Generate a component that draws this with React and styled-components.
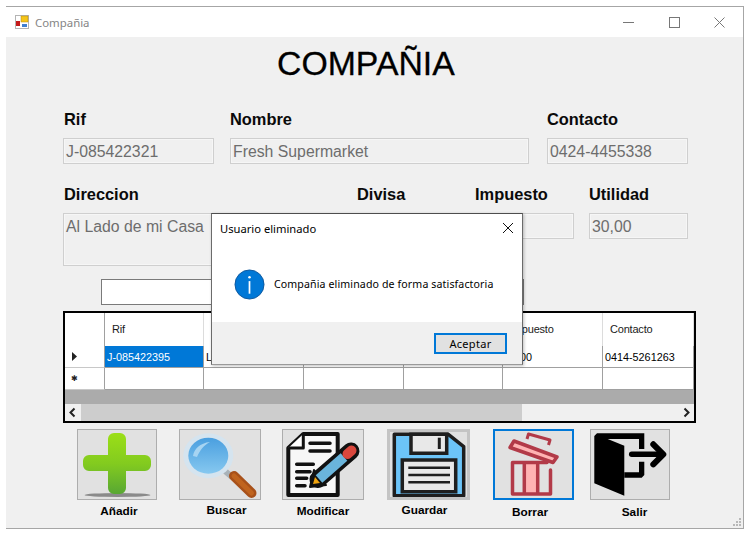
import styled, { createGlobalStyle } from 'styled-components';

const GlobalStyle = createGlobalStyle`
  html, body {
    margin: 0;
    padding: 0;
    background: #ffffff;
  }
`;

const Win = styled.div`
  position: relative;
  box-sizing: border-box;
  width: 738px;
  height: 523px;
  margin: 6px 0 0 6px;
  border-top: 1px solid #a6a6a6;
  border-right: 1px solid #a6a6a6;
  border-bottom: 1px solid #a6a6a6;
  background: #f0f0f0;
  font-family: "Liberation Sans", Arial, sans-serif;
  overflow: hidden;
`;

const TitleBar = styled.div`
  height: 30px;
  background: #ffffff;
  display: flex;
  align-items: center;
  padding: 0 1px 0 9px;
`;

const AppIcon = styled.svg`
  width: 14px;
  height: 14px;
  margin-right: 6px;
`;

const WinTitle = styled.span`
  font-family: "Noto Sans", sans-serif;
  font-size: 11.4px;
  color: #858585;
  flex: 1;
`;

const WinControl = styled.svg`
  width: 45px;
  height: 30px;
  display: block;
`;

const Form = styled.div`
  padding-left: 57px;
`;

const Heading = styled.h1`
  margin: 6px 0 0 214px;
  height: 40px;
  font-size: 33.8px;
  line-height: 40px;
  font-weight: 400;
  color: #000000;
  -webkit-text-stroke: 0.3px #000000;
`;

const Row = styled.div`
  display: flex;
  align-items: flex-start;
  margin-top: ${p => p.$top}px;
`;

const Field = styled.div`
  width: ${p => p.$w}px;
  margin-left: ${p => p.$gap || 0}px;
`;

const FieldLabel = styled.div`
  height: 20px;
  line-height: 20px;
  margin-bottom: 9px;
  padding-left: ${p => p.$inset || 0}px;
  font-size: 16.4px;
  font-weight: 700;
  color: #0a0a0a;
`;

const ReadOnlyBox = styled.div`
  box-sizing: border-box;
  height: ${p => p.$h || 26}px;
  padding: 3px 2px 0;
  border: 1px solid #cfcfcf;
  box-shadow: inset 0 0 0 1px #f6f6f6;
  background: #f0f0f0;
  font-size: 15.8px;
  line-height: 20px;
  color: #6d6d6d;
  white-space: nowrap;
  overflow: hidden;
`;

const SearchBox = styled.div`
  box-sizing: border-box;
  width: 423px;
  height: 26px;
  margin: 13px 0 0 38px;
  border: 1px solid #7a7a7a;
  background: #ffffff;
`;

const Table = styled.div`
  box-sizing: border-box;
  width: 633px;
  height: 112px;
  margin-top: 6px;
  border: 2px solid #000000;
  background: #ababab;
  display: flex;
  flex-direction: column;
  overflow: hidden;
`;

const TableRow = styled.div`
  display: grid;
  grid-template-columns: 40px 99px 100px 100px 99px 100px 91px;
  height: ${p => p.$h}px;
  flex: none;
`;

const HeaderCell = styled.div`
  box-sizing: border-box;
  background: #ffffff;
  border-right: 1px solid #dcdcdc;
  border-bottom: 1px solid #c8c8c8;
  font-size: 11px;
  letter-spacing: -0.2px;
  line-height: 33px;
  padding-left: 7px;
  color: #1a1a1a;
`;

const RowHead = styled.div`
  box-sizing: border-box;
  background: #ffffff;
  border-right: 1px solid #a0a0a0;
  border-bottom: 1px solid #c8c8c8;
  display: flex;
  align-items: center;
  padding-left: 6px;
  font-size: 8px;
  color: #222222;
`;

const Cell = styled.div`
  box-sizing: border-box;
  background: ${p => (p.$selected ? '#0078d7' : '#ffffff')};
  color: ${p => (p.$selected ? '#ffffff' : '#000000')};
  border-right: 1px solid #a0a0a0;
  border-bottom: 1px solid #a0a0a0;
  font-size: 10.8px;
  line-height: 22px;
  padding-left: 2px;
  white-space: nowrap;
  overflow: hidden;
`;

const ScrollBar = styled.div`
  margin-top: auto;
  height: 17px;
  background: #f0f0f0;
  display: flex;
  align-items: stretch;
`;

const ScrollButton = styled.svg`
  width: 16px;
  height: 17px;
  flex: none;
`;

const ScrollThumb = styled.div`
  width: 441px;
  background: #cdcdcd;
`;

const ScrollTrack = styled.div`
  flex: 1;
`;

const Toolbar = styled.div`
  display: flex;
  align-items: flex-start;
  margin: 6px 0 0 14px;
`;

const ToolItem = styled.div`
  display: flex;
  flex-direction: column;
  align-items: center;
  width: ${p => p.$w}px;
  margin-left: ${p => p.$gap || 0}px;
`;

const ToolButton = styled.div`
  box-sizing: border-box;
  width: 100%;
  height: 71px;
  background: #e1e1e1;
  border: ${p => p.$border || '1px solid #adadad'};
`;

const ToolIcon = styled.svg`
  width: 100%;
  height: 100%;
  display: block;
`;

const ToolLabel = styled.div`
  margin-top: ${p => p.$top}px;
  margin-left: ${p => p.$dx}px;
  font-size: 11.8px;
  line-height: 14px;
  font-weight: 700;
  color: #000000;
  white-space: nowrap;
`;

const Grip = styled.svg`
  position: absolute;
  right: 2px;
  bottom: 1px;
  width: 10px;
  height: 10px;
`;

const Dialog = styled.div`
  position: absolute;
  left: 205px;
  top: 206px;
  box-sizing: border-box;
  width: 312px;
  height: 152px;
  border: 1px solid #6b6b6b;
  border-top-color: #4d4d4d;
  border-bottom-color: #9a9a9a;
  box-shadow: 1px 1px 3px rgba(0, 0, 0, 0.25);
  background: #ffffff;
  display: flex;
  flex-direction: column;
  font-family: "Noto Sans", sans-serif;
  color: #000000;
`;

const DialogHead = styled.div`
  height: 28px;
  display: flex;
  align-items: center;
  justify-content: space-between;
  padding: 0 8px;
  font-size: 11.2px;
`;

const CloseIcon = styled.svg`
  width: 12px;
  height: 12px;
  display: block;
`;

const DialogBody = styled.div`
  flex: 1;
  display: flex;
  align-items: center;
  gap: 9px;
  padding: 4px 0 0 22px;
  font-size: 10.6px;
  letter-spacing: 0.12px;
`;

const InfoIcon = styled.svg`
  width: 31px;
  height: 31px;
  flex: none;
`;

const DialogFoot = styled.div`
  height: 42px;
  background: #f0f0f0;
  display: flex;
  justify-content: flex-end;
  align-items: flex-start;
  padding: 11px 15px 0 0;
  box-sizing: border-box;
`;

const OkButton = styled.div`
  box-sizing: border-box;
  width: 73px;
  height: 21px;
  border: 2px solid #0078d7;
  background: #e1e1e1;
  font-size: 11px;
  letter-spacing: 0.3px;
  line-height: 17px;
  text-align: center;
`;

const PlusIcon = () => (
  <ToolIcon viewBox="0 0 78 69">
    <defs>
      <linearGradient id="plusGreen" x1="0" y1="0" x2="0" y2="1">
        <stop offset="0" stopColor="#9bdf17" />
        <stop offset="0.5" stopColor="#83cb1f" />
        <stop offset="1" stopColor="#58a733" />
      </linearGradient>
    </defs>
    <ellipse cx="39.500" cy="65" rx="33" ry="2" fill="#8a8a8a" />
    <path
      d="M36 3h6a6 6 0 0 1 6 6v16h19a6 6 0 0 1 6 6v4a6 6 0 0 1-6 6H48v17a6 6 0 0 1-6 6h-6a6 6 0 0 1-6-6V41H11a6 6 0 0 1-6-6v-4a6 6 0 0 1 6-6h19V9a6 6 0 0 1 6-6z"
      fill="url(#plusGreen)"
    />
  </ToolIcon>
);

const LensIcon = () => (
  <ToolIcon viewBox="0 0 80 69">
    <defs>
      <linearGradient id="lensBlue" x1="0" y1="0" x2="0" y2="1">
        <stop offset="0" stopColor="#4a9fdf" />
        <stop offset="1" stopColor="#86c8f0" />
      </linearGradient>
    </defs>
    <path d="M45 41l7 6" stroke="#a9b2b8" strokeWidth="6" />
    <path d="M54 46l17.500 17" stroke="#a8511a" strokeWidth="10" strokeLinecap="round" />
    <path d="M54 46l17.500 17" stroke="#c0641f" strokeWidth="5" strokeLinecap="round" />
    <ellipse cx="28.300" cy="25.700" rx="25" ry="22.500" fill="#d5e4ef" />
    <ellipse cx="28.300" cy="25.700" rx="20" ry="18" fill="url(#lensBlue)" />
    <path d="M13 26c1-7 7-13 17-14-6 3-10 8-13 15z" fill="#a6d4f2" />
  </ToolIcon>
);

const NotesIcon = () => (
  <ToolIcon viewBox="0 0 80 69">
    <path d="M5.300 18L20.300 4h34.400v61H5.300z" fill="#f7f7f7" stroke="#111111" strokeWidth="4" strokeLinejoin="round" />
    <path d="M5.300 18h15V4" fill="#ffffff" stroke="#111111" strokeWidth="3" strokeLinejoin="round" />
    <path
      d="M27 13.300h20M27 21h20M13.700 34.300h16.600M13.700 41.700h13.300M13.700 48.300h10M13.700 55.700h8.300"
      stroke="#111111"
      strokeWidth="3.500"
      strokeLinecap="round"
    />
    <path d="M27 57l4-17 12 15z" fill="#111111" stroke="#111111" strokeWidth="2" strokeLinejoin="round" />
    <path d="M35 49.500L68 21" stroke="#111111" strokeWidth="17" strokeLinecap="round" />
    <path d="M36 49L61 27" stroke="#6ab5dc" strokeWidth="10" />
    <path d="M64.500 24l4-3.500" stroke="#d9473d" strokeWidth="10" strokeLinecap="round" />
    <path d="M30 54l2-7 5 6z" fill="#f0a40f" />
  </ToolIcon>
);

const DiskIcon = () => (
  <ToolIcon viewBox="0 0 77 65">
    <path d="M4.300 2.300h54l15.400 12.400v49H4.300z" fill="#6cc4f8" stroke="#1e1e1e" strokeWidth="3.500" strokeLinejoin="round" />
    <path d="M21 2.300h35.700v19H21z" fill="#e8e8e8" stroke="#1e1e1e" strokeWidth="3.500" />
    <path d="M49.300 5.700V17" stroke="#1e1e1e" strokeWidth="3" />
    <path d="M12.300 28h53.400v31.700H12.300z" fill="#e8e8e8" stroke="#1e1e1e" strokeWidth="3.500" />
    <path d="M18.300 35.700H60M18.300 43H60M18.300 50.300H60" stroke="#1e1e1e" strokeWidth="2.500" />
  </ToolIcon>
);

const TrashIcon = () => (
  <ToolIcon viewBox="0 0 77 67">
    <path d="M19 10l43 16-4 5.500-43-15z" fill="#ffb3b3" stroke="#b23a48" strokeWidth="3.500" strokeLinejoin="round" />
    <path d="M32 8l1.500-5L55 9l-1.500 5" fill="none" stroke="#b23a48" strokeWidth="3" strokeLinejoin="round" />
    <path d="M29.300 33h13.400v30H29.300z" fill="#ffb3b3" />
    <path
      d="M52 31.500H17.500V63h38V39M29.300 31.500V63M42.700 31.500V63"
      fill="none"
      stroke="#b23a48"
      strokeWidth="3.500"
      strokeLinecap="round"
      strokeLinejoin="round"
    />
  </ToolIcon>
);

const DoorIcon = () => (
  <ToolIcon viewBox="0 0 78 69">
    <path d="M6 3.300h47.300V19H48V9H16.700l16.600 6.700v50L3.300 53.300V6z" fill="#000000" />
    <path d="M48 31.700h5.300V45l-2.600 2.700H33.300v-5.400H48z" fill="#000000" />
    <path d="M40.700 24.300H71" fill="none" stroke="#000000" strokeWidth="5.500" strokeLinecap="round" />
    <path d="M62.300 14.300l10 10-10 10" fill="none" stroke="#000000" strokeWidth="6" strokeLinecap="round" strokeLinejoin="round" />
  </ToolIcon>
);

const tools = [
  { name: 'Añadir', w: 80, gap: 0, top: 4, dx: 4, icon: <PlusIcon /> },
  { name: 'Buscar', w: 82, gap: 22, top: 3, dx: 13, icon: <LensIcon /> },
  { name: 'Modificar', w: 82, gap: 21, top: 4, dx: 0, icon: <NotesIcon /> },
  { name: 'Guardar', w: 83, gap: 23, top: 3, dx: -8, border: '3px solid #c4c4c4', icon: <DiskIcon /> },
  { name: 'Borrar', w: 81, gap: 23, top: 5, dx: -7, border: '2px solid #0078d7', icon: <TrashIcon /> },
  { name: 'Salir', w: 80, gap: 16, top: 5, dx: 9, icon: <DoorIcon /> }
];

const columns = ['Rif', 'Nombre', 'Direccion', 'Divisa', 'Impuesto', 'Contacto'];
const gridRow = ['J-085422395', 'L', '', '', '16,00', '0414-5261263'];

const App = () => {
  return (
    <>
      <GlobalStyle />
      <Win>
        <TitleBar>
          <AppIcon viewBox="0 0 14 14">
            <rect x="0.5" y="0.5" width="13" height="13" fill="#ffffff" stroke="#b4b4b4" />
            <rect x="1" y="6" width="4" height="5" fill="#c41a1a" />
            <rect x="6" y="1" width="7" height="6" fill="#f5c518" stroke="#b58a10" strokeWidth="0.5" />
            <rect x="7" y="9" width="5" height="3" fill="#3f7fd0" />
          </AppIcon>
          <WinTitle>Compañia</WinTitle>
          <WinControl viewBox="0 0 45 30">
            <path d="M16 15.500h11" stroke="#777777" />
          </WinControl>
          <WinControl viewBox="0 0 45 30">
            <rect x="17.500" y="10.500" width="10" height="10" fill="none" stroke="#777777" />
          </WinControl>
          <WinControl viewBox="0 0 45 30">
            <path d="M17.500 10.500l10 10M27.500 10.500l-10 10" stroke="#777777" />
          </WinControl>
        </TitleBar>

        <Form>
          <Heading>COMPAÑIA</Heading>

          <Row $top={26}>
            <Field $w={151}>
              <FieldLabel $inset={1}>Rif</FieldLabel>
              <ReadOnlyBox>J-085422321</ReadOnlyBox>
            </Field>
            <Field $w={299} $gap={16}>
              <FieldLabel>Nombre</FieldLabel>
              <ReadOnlyBox>Fresh Supermarket</ReadOnlyBox>
            </Field>
            <Field $w={141} $gap={18}>
              <FieldLabel>Contacto</FieldLabel>
              <ReadOnlyBox>0424-4455338</ReadOnlyBox>
            </Field>
          </Row>

          <Row $top={20}>
            <Field $w={277}>
              <FieldLabel $inset={1}>Direccion</FieldLabel>
              <ReadOnlyBox $h={53}>Al Lado de mi Casa</ReadOnlyBox>
            </Field>
            <Field $w={102} $gap={17}>
              <FieldLabel>Divisa</FieldLabel>
              <ReadOnlyBox />
            </Field>
            <Field $w={99} $gap={16}>
              <FieldLabel>Impuesto</FieldLabel>
              <ReadOnlyBox />
            </Field>
            <Field $w={99} $gap={15}>
              <FieldLabel>Utilidad</FieldLabel>
              <ReadOnlyBox>30,00</ReadOnlyBox>
            </Field>
          </Row>

          <SearchBox />

          <Table>
            <TableRow $h={33}>
              <RowHead />
              {columns.map(c => (
                <HeaderCell key={c}>{c}</HeaderCell>
              ))}
            </TableRow>
            <TableRow $h={22}>
              <RowHead>
                <svg width="7" height="9" viewBox="0 0 7 9">
                  <path d="M1 0l5 4.500-5 4.500z" fill="#222222" />
                </svg>
              </RowHead>
              {gridRow.map((v, i) => (
                <Cell key={i} $selected={i === 0}>{v}</Cell>
              ))}
            </TableRow>
            <TableRow $h={22}>
              <RowHead>✱</RowHead>
              {gridRow.map((v, i) => (
                <Cell key={i} />
              ))}
            </TableRow>
            <ScrollBar>
              <ScrollButton viewBox="0 0 16 17">
                <path d="M9.500 4.500l-4 4 4 4" fill="none" stroke="#222222" strokeWidth="2" />
              </ScrollButton>
              <ScrollThumb />
              <ScrollTrack />
              <ScrollButton viewBox="0 0 16 17">
                <path d="M6.500 4.500l4 4-4 4" fill="none" stroke="#222222" strokeWidth="2" />
              </ScrollButton>
            </ScrollBar>
          </Table>

          <Toolbar>
            {tools.map(t => (
              <ToolItem key={t.name} $w={t.w} $gap={t.gap}>
                <ToolButton $border={t.border}>{t.icon}</ToolButton>
                <ToolLabel $top={t.top} $dx={t.dx}>{t.name}</ToolLabel>
              </ToolItem>
            ))}
          </Toolbar>
        </Form>

        <Grip viewBox="0 0 10 10">
          <path d="M8 1h2v2H8zM5 4h2v2H5zM8 4h2v2H8zM2 7h2v2H2zM5 7h2v2H5zM8 7h2v2H8z" fill="#b8b8b8" />
        </Grip>

        <Dialog>
          <DialogHead>
            <span>Usuario eliminado</span>
            <CloseIcon viewBox="0 0 12 12">
              <path d="M1 1l10 10M11 1L1 11" stroke="#111111" strokeWidth="1" />
            </CloseIcon>
          </DialogHead>
          <DialogBody>
            <InfoIcon viewBox="0 0 32 32">
              <circle cx="16" cy="16" r="15" fill="#0078d7" stroke="#10599e" strokeWidth="1" />
              <circle cx="16" cy="8.500" r="1.300" fill="#ffffff" />
              <path d="M16 12.500v13" stroke="#ffffff" strokeWidth="1.800" />
            </InfoIcon>
            <span>Compañia eliminado de forma satisfactoria</span>
          </DialogBody>
          <DialogFoot>
            <OkButton>Aceptar</OkButton>
          </DialogFoot>
        </Dialog>
      </Win>
    </>
  );
};

export default App;
